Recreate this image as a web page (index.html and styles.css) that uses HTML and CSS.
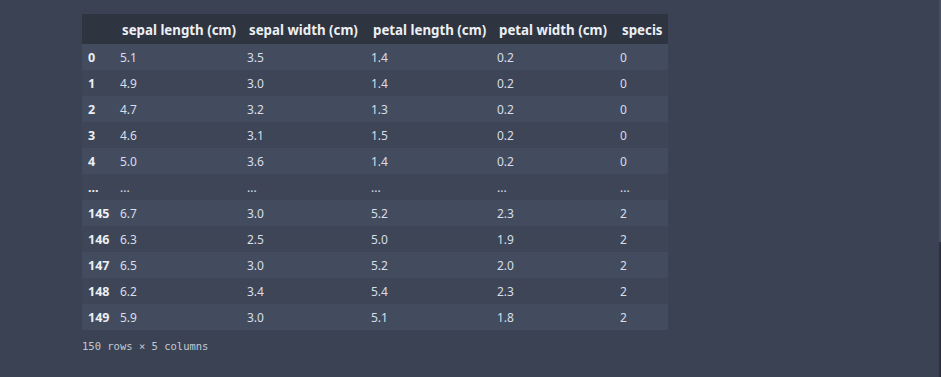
FILE: index.html
```html
<!DOCTYPE html>
<html>
<head>
<meta charset="utf-8">
<link rel="stylesheet" href="styles.css">
</head>
<body>
<div class="output">
  <table class="df">
    <colgroup>
      <col class="c-idx"><col class="c1"><col class="c2"><col class="c3"><col class="c4"><col class="c5">
    </colgroup>
    <thead>
      <tr><th></th><th>sepal length (cm)</th><th>sepal width (cm)</th><th>petal length (cm)</th><th>petal width (cm)</th><th>specis</th></tr>
    </thead>
    <tbody>
      <tr><th>0</th><td>5.1</td><td>3.5</td><td>1.4</td><td>0.2</td><td>0</td></tr>
      <tr><th>1</th><td>4.9</td><td>3.0</td><td>1.4</td><td>0.2</td><td>0</td></tr>
      <tr><th>2</th><td>4.7</td><td>3.2</td><td>1.3</td><td>0.2</td><td>0</td></tr>
      <tr><th>3</th><td>4.6</td><td>3.1</td><td>1.5</td><td>0.2</td><td>0</td></tr>
      <tr><th>4</th><td>5.0</td><td>3.6</td><td>1.4</td><td>0.2</td><td>0</td></tr>
      <tr><th>...</th><td>...</td><td>...</td><td>...</td><td>...</td><td>...</td></tr>
      <tr><th>145</th><td>6.7</td><td>3.0</td><td>5.2</td><td>2.3</td><td>2</td></tr>
      <tr><th>146</th><td>6.3</td><td>2.5</td><td>5.0</td><td>1.9</td><td>2</td></tr>
      <tr><th>147</th><td>6.5</td><td>3.0</td><td>5.2</td><td>2.0</td><td>2</td></tr>
      <tr><th>148</th><td>6.2</td><td>3.4</td><td>5.4</td><td>2.3</td><td>2</td></tr>
      <tr><th>149</th><td>5.9</td><td>3.0</td><td>5.1</td><td>1.8</td><td>2</td></tr>
    </tbody>
  </table>
  <p class="shape">150 rows × 5 columns</p>
</div>
<div class="scrollbar"><div class="thumb"></div></div>
</body>
</html>
```
FILE: styles.css
```css
html, body {
  margin: 0;
  padding: 0;
  background: #3a4253;
  height: 100%;
}
body {
  font-family: "Noto Sans", "Open Sans", sans-serif;
  color: #e5e9f0;
}
.output {
  padding: 14px 0 0 82px;
}
.df {
  border-collapse: collapse;
  table-layout: fixed;
  width: 586px;
  font-size: 12px;
}
.c-idx { width: 33px; }
.c1 { width: 127px; }
.c2 { width: 124px; }
.c3 { width: 126px; }
.c4 { width: 123px; }
.c5 { width: 53px; }
.df thead tr {
  background: #2e3440;
  height: 30px;
}
.df thead th {
  font-size: 13.3px;
  font-weight: 700;
  color: #eceff4;
  text-align: left;
  padding: 2px 0 0 7px;
  white-space: nowrap;
  overflow: hidden;
}
.df tbody tr {
  height: 26px;
  background: #3d4556;
}
.df tbody tr:nth-child(odd) {
  background: #434c5e;
}
.df tbody th {
  font-weight: 700;
  font-size: 12.5px;
  text-align: left;
  padding: 0 0 0 6px;
  color: #eceff4;
}
.df td {
  padding: 0 0 0 5px;
  color: #d8dee9;
}
.shape {
  margin: 10px 0 0 0;
  font-family: "DejaVu Sans Mono", monospace;
  font-size: 10.5px;
  color: #c3c9d4;
}
.scrollbar {
  position: fixed;
  top: 0;
  right: 0;
  width: 2px;
  height: 100%;
  background: #2b303b;
}
.thumb {
  height: 242px;
  background: #464e5f;
}
```
